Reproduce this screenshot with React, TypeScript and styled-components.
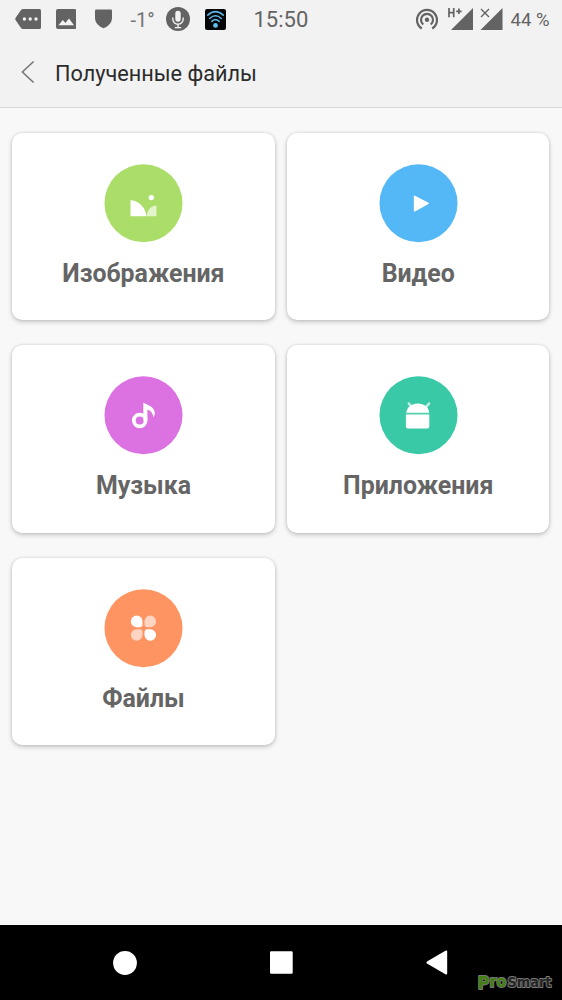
import React from "react";
import styled, { createGlobalStyle } from "styled-components";

const GlobalStyle = createGlobalStyle`
  * { box-sizing: border-box; }
  body { margin: 0; background: #f8f8f8; font-family: Roboto, "Liberation Sans", sans-serif; }
  svg { display: block; flex: none; }
`;

const Screen = styled.div`
  display: flex;
  flex-direction: column;
  height: 1000px;
  width: 562px;
  overflow: hidden;
  background: #f8f8f8;
`;

const StatusBar = styled.div`
  display: flex;
  align-items: center;
  height: 38px;
  padding-left: 15px;
  background: #f2f2f2;
  color: #636363;
`;

const StatusItem = styled.div<{ $gap: number; $width: number }>`
  flex: none;
  margin-left: ${(p) => p.$gap}px;
  width: ${(p) => p.$width}px;
`;

const StatusText = styled(StatusItem)<{ $size: number; $color?: string }>`
  font-size: ${(p) => p.$size}px;
  color: ${(p) => p.$color ?? "inherit"};
  line-height: 38px;
  white-space: nowrap;
  padding-top: 1px;
`;

const Header = styled.header`
  display: flex;
  align-items: center;
  height: 70px;
  padding: 0 0 1px 21px;
  background: #f2f2f2;
  border-bottom: 1px solid #d6d6d6;
`;

const Title = styled.h1`
  margin: 0 0 0 19px;
  padding-top: 3px;
  font-size: 21.7px;
  font-weight: 400;
  line-height: 30px;
  color: #2b2b2b;
`;

const Grid = styled.main`
  flex: 1;
  display: grid;
  grid-template-columns: 262.3px 262.3px;
  grid-auto-rows: 187.5px;
  gap: 25px 12.5px;
  padding: 24.8px 12.3px;
`;

const Card = styled.section`
  display: flex;
  flex-direction: column;
  align-items: center;
  padding-top: 31.2px;
  border-radius: 10px;
  background: #fff;
  box-shadow: 0 2px 5px rgba(0, 0, 0, 0.2), 0 0 3px rgba(0, 0, 0, 0.12);
`;

const Disc = styled.svg`
  width: 79px;
  height: 79px;
`;

const Label = styled.div`
  margin-top: 14.6px;
  font-size: 24.9px;
  font-weight: 700;
  line-height: 32px;
  color: #656565;
`;

const NavBar = styled.nav`
  position: relative;
  display: flex;
  align-items: center;
  flex: none;
  height: 75px;
  padding-left: 113px;
  background: #000;
`;

const NavButton = styled.div<{ $gap?: number }>`
  margin-left: ${(p) => p.$gap ?? 0}px;
`;

const Watermark = styled.svg`
  position: absolute;
  left: 470px;
  top: 43px;
`;

const ImageGlyph = () => (
  <g>
    <path d="M26 36C34 36 41 43 42 52H26Z" />
    <path d="M42 52C43 45 47 41.2 52 41.2V52Z" opacity="0.65" />
    <circle cx="46.8" cy="33.4" r="2.7" />
  </g>
);

const VideoGlyph = () => (
  <path d="M34.3 32.3Q34.3 31 35.5 31.5L49 38.5Q49.8 39.2 49 39.8L35.5 47.2Q34.3 47.7 34.3 46.4Z" />
);

const MusicGlyph = () => (
  <g>
    <circle cx="35.2" cy="44.3" r="5.9" fill="none" stroke="#fff" strokeWidth="3.7" />
    <path d="M38.8 27.3Q38.8 26.3 39.8 26.7C42.6 28.6 46.5 29.3 48.9 32.7C50.9 35.7 50.7 38.8 48.8 41.1C48.4 36.5 45.8 34.1 42.9 33.5V44.2H38.8Z" />
  </g>
);

const AndroidGlyph = () => (
  <g>
    <path d="M29.2 27.2L32 30.5M49.6 27.2L46.8 30.5" stroke="#fff" strokeOpacity="0.7" strokeWidth="2.4" strokeLinecap="round" />
    <path d="M26.8 36.5C27.4 31 32 27.3 38.3 27.3S49.2 31 49.8 36.5Z" />
    <path d="M26.6 36.5h23.2v1.8H26.6Z" opacity="0.15" />
    <path d="M26.4 38.2H49.8V50.2Q49.8 52.2 47.8 52.2H28.4Q26.4 52.2 26.4 50.2Z" />
  </g>
);

const FilesGlyph = () => (
  <g>
    <path d="M32.2 26.4A5.8 5.8 0 0 1 38 32.2V35Q38 38 35 38H32.2A5.8 5.8 0 0 1 32.2 26.4Z" />
    <path d="M45.8 26.4A5.8 5.8 0 0 1 45.8 38H43Q40 38 40 35V32.2A5.8 5.8 0 0 1 45.8 26.4Z" opacity="0.6" />
    <path d="M32.2 40H35Q38 40 38 43V45.8A5.8 5.8 0 1 1 32.2 40Z" opacity="0.6" />
    <path d="M43 40H45.8A5.8 5.8 0 1 1 40 45.8V43Q40 40 43 40Z" />
  </g>
);

const categories = [
  { label: "Изображения", color: "#abde68", Glyph: ImageGlyph },
  { label: "Видео", color: "#54b8f6", Glyph: VideoGlyph },
  { label: "Музыка", color: "#dc72e2", Glyph: MusicGlyph },
  { label: "Приложения", color: "#39c9a7", Glyph: AndroidGlyph },
  { label: "Файлы", color: "#ff9463", Glyph: FilesGlyph },
];

const Status = () => (
  <StatusBar>
    <StatusItem $gap={0} $width={26}>
      <svg width="26" height="20" viewBox="0 0 26 20">
        <path d="M8 0H24.5Q26 0 26 1.5V18.5Q26 20 24.5 20H8Q6.8 20 6 19L.5 11Q0 10 .5 9L6 1Q6.8 0 8 0Z" fill="#636363" />
        <g fill="#f2f2f2">
          <circle cx="9.4" cy="10" r="1.7" />
          <circle cx="15.2" cy="10" r="1.7" />
          <circle cx="21" cy="10" r="1.7" />
        </g>
      </svg>
    </StatusItem>
    <StatusItem $gap={14.5} $width={20.5}>
      <svg width="20.5" height="20" viewBox="0 0 20.5 20">
        <rect width="20.5" height="20" rx="2" fill="#636363" />
        <path d="M2.5 16.3L6.8 11L9.4 14L13 9.5L18 16.3Z" fill="#f2f2f2" />
      </svg>
    </StatusItem>
    <StatusItem $gap={19} $width={17}>
      <svg width="17" height="20" viewBox="0 0 17 20">
        <path d="M1 .6H16Q17 .6 17 1.6V9C17 14 13 17.5 8.5 19.3C4 17.5 0 14 0 9V1.6Q0 .6 1 .6Z" fill="#636363" />
      </svg>
    </StatusItem>
    <StatusText $gap={18.5} $width={23.5} $size={20} $color="#757575">-1°</StatusText>
    <StatusItem $gap={12} $width={24}>
      <svg width="24" height="24" viewBox="0 0 24 24">
        <circle cx="12" cy="12" r="12" fill="#636363" />
        <rect x="9.3" y="3.8" width="5.4" height="11" rx="2.7" fill="#f2f2f2" />
        <path d="M6.8 10.5V12A5.2 5.2 0 0 0 17.2 12V10.5M12 17.2V20.3M8.8 20.6H15.2" fill="none" stroke="#f2f2f2" strokeWidth="1.4" />
      </svg>
    </StatusItem>
    <StatusItem $gap={15} $width={21}>
      <svg width="21" height="21" viewBox="0 0 21 21">
        <rect width="21" height="21" rx="2" fill="#050708" />
        <g fill="none" stroke="#5fb4e3" strokeWidth="1.6" strokeLinecap="round">
          <path d="M2.8 6.2Q10.5 -.8 18.2 6.2" />
          <path d="M4.7 9.5Q10.5 4 16.3 9.5" />
          <path d="M6.8 12.3Q10.5 8.8 14.2 12.3" />
        </g>
        <circle cx="10.5" cy="16.4" r="2.4" fill="#5fc0f2" />
      </svg>
    </StatusItem>
    <StatusText $gap={27.5} $width={56} $size={22}>15:50</StatusText>
    <StatusItem $gap={106} $width={22}>
      <svg width="22" height="22" viewBox="0 0 22 22">
        <g fill="none" stroke="#636363" strokeWidth="2.2">
          <path d="M5.8 20.5A10 10 0 1 1 16.2 20.5" />
          <path d="M7.3 16.5A6 6 0 1 1 14.7 16.5" />
        </g>
        <circle cx="11" cy="11.7" r="2.2" fill="#636363" />
      </svg>
    </StatusItem>
    <StatusItem $gap={10} $width={25}>
      <svg width="25" height="22" viewBox="0 0 25 22">
        <path d="M3 22L25 0V22Z" fill="#636363" />
        <path d="M1 0V9.3M5.7 0V9.3M1 4.6H5.7M8.2 3.3H13.6M10.9 .6V6" fill="none" stroke="#636363" strokeWidth="1.7" />
      </svg>
    </StatusItem>
    <StatusItem $gap={7.5} $width={22.5}>
      <svg width="22.5" height="22" viewBox="0 0 22.5 22">
        <path d="M.5 22L22.5 0V22Z" fill="#636363" />
        <path d="M1 1L9 9M9 1L1 9" stroke="#636363" strokeWidth="1.4" />
      </svg>
    </StatusItem>
    <StatusText $gap={8} $width={42} $size={18.5}>44 %</StatusText>
  </StatusBar>
);

export default function App() {
  return (
    <>
      <GlobalStyle />
      <Screen>
        <Status />
        <Header>
          <svg width="15" height="24" viewBox="0 0 15 24">
            <path d="M12.6 1.5L1.4 12L12.6 22.5" fill="none" stroke="#777" strokeWidth="1.6" />
          </svg>
          <Title>Полученные файлы</Title>
        </Header>
        <Grid>
          {categories.map(({ label, color, Glyph }) => (
            <Card key={label}>
              <Disc viewBox="-0.5 -0.2 79 79" fill="#fff">
                <circle cx="39" cy="39" r="39" fill={color} />
                <Glyph />
              </Disc>
              <Label>{label}</Label>
            </Card>
          ))}
        </Grid>
        <NavBar>
          <NavButton>
            <svg width="24" height="24" viewBox="0 0 24 24">
              <circle cx="12" cy="12" r="11.9" fill="#fff" />
            </svg>
          </NavButton>
          <NavButton $gap={133}>
            <svg width="23" height="23" viewBox="0 0 23 23">
              <rect x="0" y="0.3" width="22.7" height="22.4" rx="1.2" fill="#fff" />
            </svg>
          </NavButton>
          <NavButton $gap={133}>
            <svg width="22" height="25" viewBox="0 0 22 25">
              <path d="M1 11.6L19.4 .8Q21.2 0 21.2 1.8V23.2Q21.2 25 19.4 24.2L1 13.4Q-.2 12.5 1 11.6Z" fill="#fff" />
            </svg>
          </NavButton>
          <Watermark width="90" height="28" viewBox="0 0 90 28">
            <g
              fontFamily="'DejaVu Sans', sans-serif"
              fontWeight="700"
              fontSize="14"
              stroke="#777"
              strokeWidth="2"
              strokeLinejoin="round"
              paintOrder="stroke"
            >
              <text x="7.5" y="20.8" textLength="29" lengthAdjust="spacingAndGlyphs" fill="#427f10">
                <tspan fontSize="18">P</tspan>
                <tspan dy="-2.3" fontSize="16">ro</tspan>
              </text>
              <text x="37.5" y="18.5" textLength="44" lengthAdjust="spacingAndGlyphs" fill="#242424">
                Smart
              </text>
            </g>
          </Watermark>
        </NavBar>
      </Screen>
    </>
  );
}
